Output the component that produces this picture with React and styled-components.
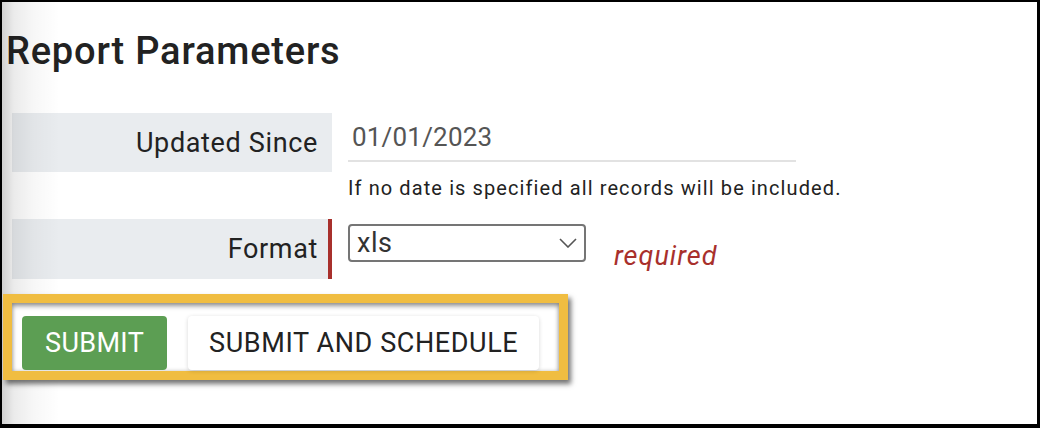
import styled, { createGlobalStyle } from 'styled-components'

const GlobalStyle = createGlobalStyle`
  body {
    margin: 0;
    background: #fff;
    font-family: Roboto, "Liberation Sans", Arial, sans-serif;
    color: #222;
  }
`

const Frame = styled.div`
  position: relative;
  width: 1040px;
  height: 428px;
  box-sizing: border-box;
  border-style: solid;
  border-color: #000;
  border-width: 2px 3px 4px 2px;
  background: #fff;
  overflow: hidden;
`

const Shade = styled.div`
  position: absolute;
  left: 0;
  top: 0;
  bottom: 0;
  width: 60px;
  pointer-events: none;
  z-index: 1;
  background: linear-gradient(
    to right,
    rgba(0, 0, 0, 0.18) 0,
    rgba(0, 0, 0, 0.08) 12px,
    rgba(0, 0, 0, 0.03) 32px,
    rgba(0, 0, 0, 0) 58px
  );
`

const Title = styled.h1`
  margin: 27px 0 0 4px;
  font-size: 38px;
  line-height: 44px;
  font-weight: 500;
  letter-spacing: 0.8px;
  color: #222;
`

const Form = styled.div`
  display: flex;
  flex-direction: column;
  gap: 19px;
  margin: 40px 0 0 10px;
`

const Row = styled.div`
  display: flex;
  align-items: flex-start;
  gap: 16px;
`

const Label = styled.div`
  box-sizing: border-box;
  width: 320px;
  height: ${p => (p.$tall ? 60 : 59)}px;
  display: flex;
  align-items: center;
  justify-content: flex-end;
  background: #e9ecef;
  font-size: 27px;
  letter-spacing: 0.65px;
  color: #222;
  padding-right: ${p => (p.$required ? 10 : 14)}px;
  border-right: ${p => (p.$required ? '4px solid #a8302c' : 'none')};
`

const Field = styled.div`
  display: flex;
  flex-direction: column;
`

const DateInput = styled.input`
  box-sizing: border-box;
  width: 448px;
  height: 49px;
  margin: 0;
  padding: 0 0 0 4px;
  border: none;
  border-bottom: 2px solid #e2e2e2;
  outline: none;
  background: transparent;
  font-family: inherit;
  font-size: 26px;
  letter-spacing: 0.2px;
  color: #555;
`

const Help = styled.div`
  margin-top: 14px;
  font-size: 20px;
  line-height: 24px;
  letter-spacing: 1.1px;
  color: #222;
`

const Select = styled.div`
  box-sizing: border-box;
  width: 238px;
  height: 38px;
  margin-top: 5px;
  display: flex;
  align-items: center;
  justify-content: space-between;
  padding: 0 7px 0 7px;
  border: 2px solid #757575;
  border-radius: 4px;
  font-size: 27px;
  letter-spacing: 0.5px;
  color: #333;
  background: #fff;
`

const Required = styled.span`
  margin: 21px 0 0 12px;
  font-size: 27px;
  line-height: 32px;
  letter-spacing: 1px;
  font-style: italic;
  color: #a8302c;
`

const Highlight = styled.div`
  position: relative;
  z-index: 2;
  box-sizing: border-box;
  width: 565px;
  height: 86px;
  margin: 15px 0 0 1px;
  border: 9px solid #f0bd41;
  background: #fff;
  box-shadow: 3px 4px 5px rgba(0, 0, 0, 0.55),
    inset 0 3px 5px rgba(0, 0, 0, 0.4), inset 0 0 4px rgba(0, 0, 0, 0.18);
  display: flex;
  align-items: flex-start;
  gap: 21px;
  padding: 13px 0 0 10px;
`

const Button = styled.button`
  height: 54px;
  margin: 0;
  padding: 0 ${p => (p.$primary ? 23 : 21)}px;
  border: none;
  border-radius: 4px;
  font-family: inherit;
  font-size: 27px;
  letter-spacing: ${p => (p.$primary ? 0.35 : 0.6)}px;
  text-transform: uppercase;
  color: ${p => (p.$primary ? '#fff' : '#222')};
  background: ${p => (p.$primary ? '#5c9e53' : '#fff')};
  box-shadow: ${p => (p.$primary ? 'none' : '0 1px 4px rgba(0, 0, 0, 0.16)')};
  cursor: pointer;
`

function Chevron() {
  return (
    <svg width="18" height="10" viewBox="0 0 18 10">
      <polyline points="1,1 9,9 17,1" fill="none" stroke="#555" strokeWidth="1.6" />
    </svg>
  )
}

export default function App() {
  return (
    <>
      <GlobalStyle />
      <Frame>
        <Shade />
        <Title>Report Parameters</Title>
        <Form>
          <Row>
            <Label>Updated Since</Label>
            <Field>
              <DateInput defaultValue="01/01/2023" />
              <Help>If no date is specified all records will be included.</Help>
            </Field>
          </Row>
          <Row>
            <Label $tall $required>Format</Label>
            <Select>
              <span>xls</span>
              <Chevron />
            </Select>
            <Required>required</Required>
          </Row>
        </Form>
        <Highlight>
          <Button $primary>Submit</Button>
          <Button>Submit and Schedule</Button>
        </Highlight>
      </Frame>
    </>
  )
}
